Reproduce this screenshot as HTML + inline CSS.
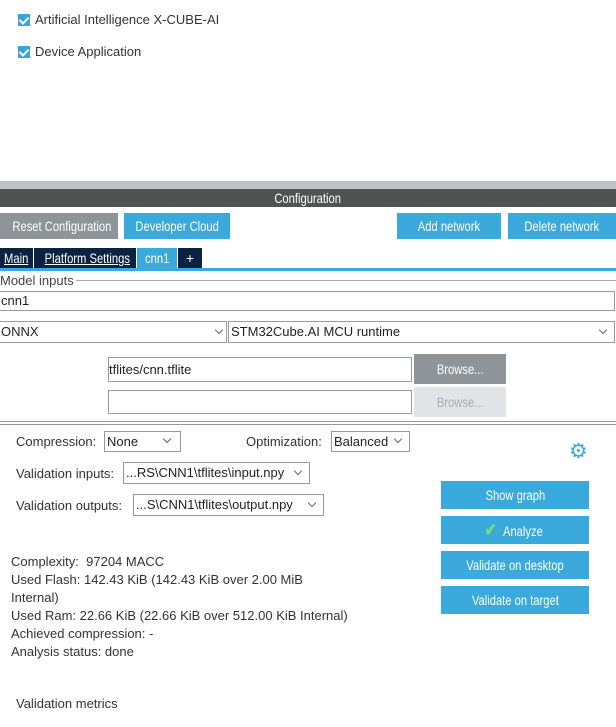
<!DOCTYPE html>
<html><head><style>
*{margin:0;padding:0;box-sizing:border-box}
body{width:616px;height:727px;background:#fff;font-family:"Liberation Sans",sans-serif;font-size:13px;color:#333;position:relative;overflow:hidden}
.a{position:absolute;white-space:nowrap}
.cb{position:absolute;width:12px;height:12px;background:#3aa3d8}
.cb:after{content:"";position:absolute;left:3px;top:1px;width:4px;height:7px;border:solid #fff;border-width:0 2px 2px 0;transform:rotate(45deg)}
.btn{position:absolute;color:#fff;text-align:center;font-size:14px;white-space:nowrap}
.btn span,.n{display:inline-block;transform:scaleX(.8)}
.blue{background:#3aa9dc}
.box{position:absolute;border:1px solid #999;background:#fff;font-size:13px;color:#222;padding-left:2px;white-space:nowrap;overflow:hidden}
.chev{position:absolute;width:6px;height:6px;border:solid #666;border-width:0 1px 1px 0;transform:rotate(45deg)}
.tab{position:absolute;top:248px;height:20px;background:#0b2342;color:#fff;font-size:14px;line-height:20px;text-align:center;white-space:nowrap}
.u{text-decoration:underline}
</style></head><body>
<div class="cb" style="left:18px;top:14px"></div><div class="a" style="left:35px;top:12px">Artificial Intelligence X-CUBE-AI</div>
<div class="cb" style="left:18px;top:46px"></div><div class="a" style="left:35px;top:44px">Device Application</div>

<div class="a" style="left:0;top:181px;width:616px;height:8px;background:#bcc4c8"></div>
<div class="a" style="left:0;top:189px;width:616px;height:18px;background:#505352;color:#fff;text-align:center;line-height:18px;font-size:14px"><span class="n">Configuration</span></div>

<div class="btn" style="left:0;top:213px;width:118px;height:26px;line-height:26px;background:#8f9499"><span>Reset Configuration</span></div>
<div class="btn blue" style="left:124px;top:213px;width:106px;height:26px;line-height:26px"><span>Developer Cloud</span></div>
<div class="btn blue" style="left:397px;top:213px;width:104px;height:26px;line-height:26px"><span>Add network</span></div>
<div class="btn blue" style="left:508px;top:213px;width:108px;height:26px;line-height:26px"><span>Delete network</span></div>

<div class="tab" style="left:0;width:33px"><span class="n u">Main</span></div>
<div class="tab" style="left:34px;width:102px"><span class="n u">Platform Settings</span></div>
<div class="tab" style="left:137px;width:40px;background:#3aa9dc"><span class="n">cnn1</span></div>
<div class="tab" style="left:178px;width:24px">+</div>
<div class="a" style="left:0;top:268px;width:616px;height:3px;background:#3aa9dc"></div>

<div class="a" style="left:0;top:273px;color:#444">Model inputs</div>
<div class="a" style="left:76px;top:280px;width:540px;height:1px;background:#aaa"></div>
<div class="box" style="left:-2px;top:291px;width:617px;height:20px;line-height:18px">cnn1</div>
<div class="box" style="left:-2px;top:321px;width:229px;height:22px;line-height:20px">ONNX</div><div class="chev" style="left:216px;top:327px"></div>
<div class="box" style="left:228px;top:321px;width:387px;height:22px;line-height:20px">STM32Cube.AI MCU runtime</div><div class="chev" style="left:600px;top:327px"></div>
<div class="box" style="left:108px;top:357px;width:304px;height:25px;line-height:23px;padding-left:0">tflites/cnn.tflite</div>
<div class="btn" style="left:414px;top:354px;width:92px;height:30px;line-height:30px;background:#8f9499"><span>Browse...</span></div>
<div class="box" style="left:108px;top:390px;width:304px;height:24px"></div>
<div class="btn" style="left:414px;top:387px;width:92px;height:30px;line-height:30px;background:#e2e5e8;color:#aaa"><span>Browse...</span></div>
<div class="a" style="left:0;top:421px;width:616px;height:1px;background:#999"></div>
<div class="a" style="left:0;top:424px;width:616px;height:1px;background:#999"></div>

<div class="a" style="left:16px;top:434px">Compression:</div>
<div class="box" style="left:104px;top:431px;width:77px;height:21px;line-height:19px">None</div><div class="chev" style="left:164px;top:436px"></div>
<div class="a" style="left:246px;top:434px">Optimization:</div>
<div class="box" style="left:331px;top:431px;width:79px;height:21px;line-height:19px">Balanced</div><div class="chev" style="left:395px;top:436px"></div>
<div class="a" style="left:569px;top:441px;color:#3aa9dc;font-size:21px;line-height:21px">⚙</div>
<div class="a" style="left:16px;top:466px">Validation inputs:</div>
<div class="box" style="left:123px;top:462px;width:187px;height:22px;line-height:20px">...RS\CNN1\tflites\input.npy</div><div class="chev" style="left:295px;top:468px"></div>
<div class="a" style="left:16px;top:498px">Validation outputs:</div>
<div class="box" style="left:133px;top:494px;width:191px;height:22px;line-height:20px">...S\CNN1\tflites\output.npy</div><div class="chev" style="left:309px;top:500px"></div>

<div class="btn blue" style="left:441px;top:481px;width:148px;height:28px;line-height:28px"><span>Show graph</span></div>
<div class="btn blue" style="left:441px;top:516px;width:148px;height:28px;line-height:28px"><span style="color:#7d7;font-weight:bold;font-size:18px">✔</span><span>Analyze</span></div>
<div class="btn blue" style="left:441px;top:551px;width:148px;height:28px;line-height:28px"><span>Validate on desktop</span></div>
<div class="btn blue" style="left:441px;top:586px;width:148px;height:28px;line-height:28px"><span>Validate on target</span></div>

<div class="a" style="left:11px;top:553px;line-height:18px;white-space:normal;width:300px">Complexity:&nbsp; 97204 MACC<br>Used Flash: 142.43 KiB (142.43 KiB over 2.00 MiB Internal)</div>
<div class="a" style="left:11px;top:607px;line-height:18px">Used Ram: 22.66 KiB (22.66 KiB over 512.00 KiB Internal)<br>Achieved compression: -<br>Analysis status: done</div>
<div class="a" style="left:16px;top:696px">Validation metrics</div>
</body></html>
